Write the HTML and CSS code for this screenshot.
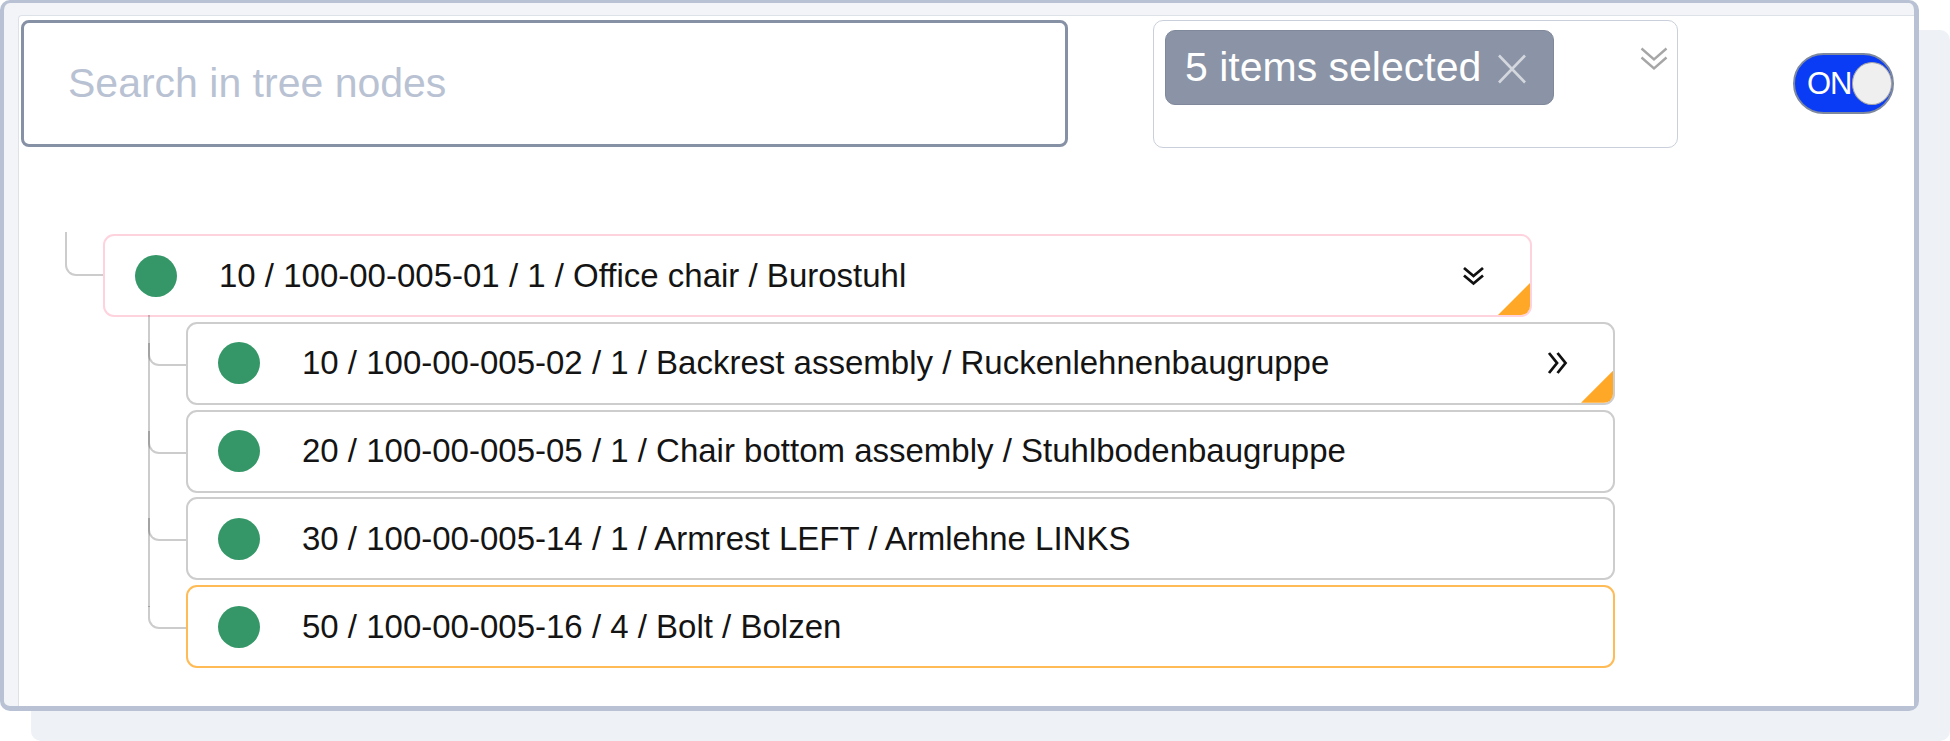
FILE: index.html
```html
<!DOCTYPE html>
<html>
<head>
<meta charset="utf-8">
<link rel="stylesheet" href="styles.css">
</head>
<body>
<div class="page">
<div class="card">
  <div class="inner">
    <div class="toolbar">
      <div class="search"><span class="placeholder">Search in tree nodes</span></div>
      <div class="multiselect">
        <div class="tag">
          <span class="tag-text">5 items selected</span>
          <svg class="tag-x" width="32" height="30" viewBox="0 0 32 30"><path d="M3 1.5 L29 28.5 M29 1.5 L3 28.5" stroke="#d4d7dd" stroke-width="2.6" fill="none"/></svg>
        </div>
        <svg class="ms-chev" width="28" height="24" viewBox="0 0 28 24"><polyline points="1.5,1.5 14,12.5 26.5,1.5" stroke="#a6a6a6" stroke-width="2.4" fill="none"/><polyline points="1.5,10.5 14,21.5 26.5,10.5" stroke="#a6a6a6" stroke-width="2.4" fill="none"/></svg>
      </div>
      <div class="toggle">
        <span class="toggle-label">ON</span>
        <span class="knob"></span>
      </div>
    </div>

    <div class="tree">
      <div class="node root">
        <div class="row row-root">
          <span class="dot"></span>
          <span class="label">10 / 100-00-005-01 / 1 / Office chair / Burostuhl</span>
          <svg class="chev chev-down" width="23" height="20" viewBox="0 0 23 20"><polyline points="2,2 11.5,10 21,2" stroke="#111" stroke-width="2.8" fill="none"/><polyline points="2,9.5 11.5,17.5 21,9.5" stroke="#111" stroke-width="2.8" fill="none"/></svg>
          <span class="corner"></span>
        </div>
        <div class="children">
          <div class="node child">
            <div class="row row-grey">
              <span class="dot"></span>
              <span class="label">10 / 100-00-005-02 / 1 / Backrest assembly / Ruckenlehnenbaugruppe</span>
              <svg class="chev chev-right" width="21" height="24" viewBox="0 0 21 24"><polyline points="2,2 10,12 2,22" stroke="#111" stroke-width="2.8" fill="none"/><polyline points="10.5,2 18.5,12 10.5,22" stroke="#111" stroke-width="2.8" fill="none"/></svg>
              <span class="corner"></span>
            </div>
          </div>
          <div class="node child">
            <div class="row row-grey">
              <span class="dot"></span>
              <span class="label">20 / 100-00-005-05 / 1 / Chair bottom assembly / Stuhlbodenbaugruppe</span>
            </div>
          </div>
          <div class="node child">
            <div class="row row-grey">
              <span class="dot"></span>
              <span class="label">30 / 100-00-005-14 / 1 / Armrest LEFT / Armlehne LINKS</span>
            </div>
          </div>
          <div class="node child">
            <div class="row row-orange">
              <span class="dot"></span>
              <span class="label">50 / 100-00-005-16 / 4 / Bolt / Bolzen</span>
            </div>
          </div>
        </div>
      </div>
    </div>
  </div>
</div>
</div>
</body>
</html>
```

FILE: styles.css
```css
* { box-sizing: border-box; }

html, body {
  margin: 0;
  padding: 0;
  background: #ffffff;
  font-family: "Liberation Sans", Arial, sans-serif;
}

.page {
  width: 1950px;
  height: 741px;
  overflow: hidden;
}

.card {
  width: 1919px;
  height: 711px;
  border-style: solid;
  border-color: #b9c2d4;
  border-width: 3px 5px 5px 4px;
  border-radius: 10px;
  background: #f2f4f7;
  box-shadow: 31px 30px 0 0 #eef1f6;
  padding: 12px 0 0 14px;
  display: flex;
  flex-direction: column;
}

.inner {
  flex: 1;
  background: #ffffff;
  border-top: 1px solid #dde1e8;
  border-left: 1px solid #dde1e8;
  border-top-left-radius: 4px;
}

.toolbar {
  display: flex;
  align-items: flex-start;
  padding: 4px 0 0 2px;
}

.search {
  width: 1047px;
  height: 127px;
  border: 3px solid #8791a6;
  border-radius: 8px;
  display: flex;
  align-items: center;
  padding-left: 44px;
}

.placeholder {
  font-size: 41px;
  color: #b9c2d3;
}

.multiselect {
  margin-left: 85px;
  width: 525px;
  height: 128px;
  border: 1.5px solid #c9cfdb;
  border-radius: 10px;
  padding: 9px 9px 0 11px;
  display: flex;
  justify-content: space-between;
  align-items: flex-start;
}

.tag {
  height: 75px;
  background: #8a94a6;
  border: 1px solid #7f899b;
  border-radius: 10px;
  display: flex;
  align-items: center;
  padding: 0 25px 0 19px;
}

.tag-text {
  font-size: 41px;
  color: #ffffff;
}

.tag-x {
  margin-left: 15px;
  margin-top: 2px;
}

.ms-chev {
  margin-top: 17px;
}

.toggle {
  margin-left: 115px;
  margin-top: 33px;
  width: 101px;
  height: 61px;
  border: 2.5px solid #7e899d;
  border-radius: 31px;
  background: #0a3cf6;
  display: flex;
  align-items: center;
  padding-left: 12px;
}

.toggle-label {
  font-size: 31px;
  color: #ffffff;
  letter-spacing: -1px;
}

.knob {
  margin-left: auto;
  width: 43px;
  height: 43px;
  border-radius: 50%;
  background: #efefef;
  border: 1px solid #a5a5a5;
}

.tree {
  margin-top: 86px;
  padding-left: 84px;
}

.node {
  position: relative;
}

.root::before {
  content: "";
  position: absolute;
  left: -38px;
  top: -2px;
  width: 38px;
  height: 42px;
  border-left: 2px solid rgba(0, 0, 0, 0.2);
  border-bottom: 2px solid rgba(0, 0, 0, 0.2);
  border-bottom-left-radius: 11px;
}

.row {
  position: relative;
  width: 1429px;
  height: 83px;
  border: 2px solid #cccccc;
  border-radius: 11px;
  display: flex;
  align-items: center;
  padding-left: 30px;
  background: #ffffff;
}

.row-root { border-color: #ffd3de; }
.row-grey { border-color: #cdcdcd; }
.row-orange { border-color: #ffbb55; }

.dot {
  width: 42px;
  height: 42px;
  border-radius: 50%;
  background: #359768;
  flex: none;
}

.label {
  margin-left: 42px;
  font-size: 33px;
  color: #141414;
  white-space: nowrap;
}

.chev {
  margin-left: auto;
  flex: none;
}

.chev-down { margin-right: 45px; }
.chev-right { margin-right: 45px; }

.corner {
  position: absolute;
  right: 0;
  bottom: 0;
  width: 32px;
  height: 32px;
  background: #ffa726;
  clip-path: polygon(100% 0, 100% 100%, 0 100%);
  border-bottom-right-radius: 9px;
}

.children {
  position: relative;
  margin-left: 83px;
}

.children::before {
  content: "";
  position: absolute;
  left: -38px;
  top: -7px;
  bottom: 61px;
  border-left: 2px solid rgba(0, 0, 0, 0.2);
}

.child {
  margin-top: 4.75px;
}

.child::before {
  content: "";
  position: absolute;
  left: -38px;
  top: 21px;
  width: 38px;
  height: 21px;
  border-left: 2px solid rgba(0, 0, 0, 0.2);
  border-bottom: 2px solid rgba(0, 0, 0, 0.2);
  border-bottom-left-radius: 11px;
}
```
